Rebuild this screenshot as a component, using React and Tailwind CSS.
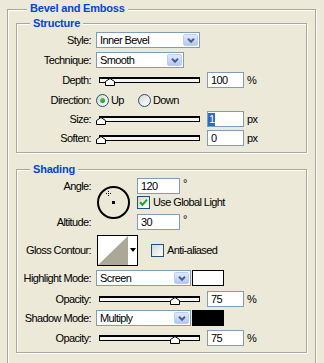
import React from "react";

function Group({ title, titleClass, className = "", children }) {
    return (
        <div
            className={`border border-[#aca899] shadow-[1px_1px_0_#fff,inset_1px_1px_0_#fff] ${className}`}
        >
            <div
                className={`w-fit bg-[#ece9d8] px-[3px] text-[11px] font-bold leading-[14px] tracking-[-0.2px] text-[#0046d5] ${titleClass}`}
            >
                {title}
            </div>
            {children}
        </div>
    );
}

function Row({ label, className = "", children }) {
    return (
        <div className={`flex h-[16px] items-center ${className}`}>
            <div className="w-[74px] text-right leading-[16px]">{label}</div>
            <div className="ml-[5px] flex items-center">{children}</div>
        </div>
    );
}

function DropBtn() {
    return (
        <div className="mr-[1px] flex h-[12px] w-[15px] items-center justify-center rounded-[2px] border border-[#bccdf4] bg-gradient-to-b from-[#e2eafd] to-[#b4c7f6]">
            <svg width="8" height="5" viewBox="0 0 8 5">
                <path d="M1 0.8 L4 3.8 L7 0.8" fill="none" stroke="#4d6185" strokeWidth="2" />
            </svg>
        </div>
    );
}

function Select({ value, className }) {
    return (
        <div className={`flex h-[16px] items-center border border-[#7f9db9] bg-white ${className}`}>
            <span className="flex-1 pl-[3px] leading-[14px]">{value}</span>
            <DropBtn />
        </div>
    );
}

function Field({ children, className = "w-[37px]" }) {
    return (
        <div className={`h-[16px] border border-[#7f9db9] bg-white pl-[3px] leading-[14px] ${className}`}>
            {children}
        </div>
    );
}

function Slider({ thumb }) {
    return (
        <div className="relative ml-[3px] mr-[7px] h-[6px] w-[101px] border border-t-2 border-black bg-[#f6f5ef]">
            <svg className={`absolute top-[-1px] ${thumb}`} width="10" height="8" viewBox="0 0 10 8">
                <path d="M0.5 7.5 V3.5 L5 0.5 L9.5 3.5 V7.5 Z" fill="#fff" stroke="#000" />
            </svg>
        </div>
    );
}

function Radio({ checked }) {
    return (
        <div className="flex h-[13px] w-[13px] items-center justify-center rounded-full border border-[#1c5180] bg-gradient-to-br from-[#d8d7cf] to-white">
            {checked && <div className="h-[5px] w-[5px] rounded-full bg-gradient-to-br from-[#5fd35f] to-[#1a8a1a]" />}
        </div>
    );
}

function Check({ checked }) {
    return (
        <div className="flex h-[13px] w-[13px] items-center justify-center border border-[#1c5180] bg-gradient-to-br from-[#d8d7cf] to-white">
            {checked && (
                <svg width="9" height="9" viewBox="0 0 9 9">
                    <path d="M1 4.2 L3.5 6.8 L8 1.6" fill="none" stroke="#21a121" strokeWidth="2" />
                </svg>
            )}
        </div>
    );
}

export default function App() {
    return (
        <div className="h-[363px] w-[324px] overflow-hidden bg-[#ece9d8] pl-[7px] pt-[9px] font-['Liberation_Sans',Arial,sans-serif] text-[11px] tracking-[-0.6px] text-black">
            <Group title="Bevel and Emboss" titleClass="-mt-[9px] ml-[11px]" className="w-[309px] px-[8px] pb-[30px]">
                <Group title="Structure" titleClass="-mt-[8px] ml-[13px]" className="mt-[8px] pb-[6px]">
                    <Row label="Style:" className="mt-[2px]">
                        <Select value="Inner Bevel" className="w-[104px]" />
                    </Row>
                    <Row label="Technique:" className="mt-[4px]">
                        <Select value="Smooth" className="w-[88px]" />
                    </Row>
                    <Row label="Depth:" className="mt-[4px]">
                        <Slider thumb="left-[5px]" />
                        <Field>100</Field>
                        <span className="ml-[3px]">%</span>
                    </Row>
                    <Row label="Direction:" className="mt-[4px]">
                        <Radio checked />
                        <span className="ml-[2px] w-[27px]">Up</span>
                        <Radio />
                        <span className="ml-[2px]">Down</span>
                    </Row>
                    <Row label="Size:" className="mt-[3px]">
                        <Slider thumb="left-[-4px]" />
                        <Field className="w-[37px] !pl-[0px]">
                            <span className="inline-block h-[13px] w-[7px] bg-[#316ac5] pl-[1px] leading-[13px] text-white">1</span>
                        </Field>
                        <span className="ml-[3px]">px</span>
                    </Row>
                    <Row label="Soften:" className="mt-[3px]">
                        <Slider thumb="left-[-4px]" />
                        <Field>0</Field>
                        <span className="ml-[3px]">px</span>
                    </Row>
                </Group>

                <Group title="Shading" titleClass="-mt-[8px] ml-[13px]" className="mt-[16px] pb-[6px]">
                    <div className="mt-[2px] flex h-[52px]">
                        <div className="flex w-[74px] flex-col justify-between text-right leading-[16px]">
                            <div>Angle:</div>
                            <div>Altitude:</div>
                        </div>
                        <div className="ml-[5px] w-[41px]">
                            <svg className="ml-[1px] mt-[8px]" width="34" height="34" viewBox="0 0 34 34">
                                <circle cx="16.5" cy="16.5" r="15.5" fill="none" stroke="#000" strokeWidth="2" />
                                <rect x="15" y="15" width="3" height="3" fill="#000" />
                                <path d="M11.5 5 V10 M9 7.5 H14" stroke="#000" strokeWidth="1" strokeDasharray="1 1" />
                            </svg>
                        </div>
                        <div className="flex flex-col">
                            <div className="flex items-start">
                                <Field className="w-[43px]">120</Field>
                                <span className="ml-[3px] leading-[10px]">°</span>
                            </div>
                            <div className="mt-[2px] flex h-[13px] items-center">
                                <Check checked />
                                <span className="ml-[3px]">Use Global Light</span>
                            </div>
                            <div className="mt-[5px] flex items-start">
                                <Field className="w-[43px]">30</Field>
                                <span className="ml-[3px] leading-[10px]">°</span>
                            </div>
                        </div>
                    </div>

                    <div className="mt-[5px] flex h-[31px] items-center">
                        <div className="w-[74px] text-right">Gloss Contour:</div>
                        <div className="ml-[6px] flex h-[31px] w-[41px] border border-black bg-white">
                            <svg width="30" height="29" viewBox="0 0 30 29">
                                <polygon points="0,29 30,0 30,29" fill="#aba897" />
                            </svg>
                            <div className="flex flex-1 justify-center pt-[12px]">
                                <div className="h-0 w-0 border-x-[3px] border-t-[4px] border-x-transparent border-t-black" />
                            </div>
                        </div>
                        <div className="ml-[13px]">
                            <Check />
                        </div>
                        <span className="ml-[3px]">Anti-aliased</span>
                    </div>

                    <Row label="Highlight Mode:" className="mt-[4px]">
                        <Select value="Screen" className="w-[95px]" />
                        <div className="ml-[1px] h-[16px] w-[32px] border border-black bg-white" />
                    </Row>
                    <Row label="Opacity:" className="mt-[5px]">
                        <Slider thumb="left-[70px]" />
                        <Field>75</Field>
                        <span className="ml-[3px]">%</span>
                    </Row>
                    <Row label="Shadow Mode:" className="mt-[3px]">
                        <Select value="Multiply" className="w-[95px]" />
                        <div className="ml-[1px] h-[16px] w-[32px] border border-black bg-black" />
                    </Row>
                    <Row label="Opacity:" className="mt-[4px]">
                        <Slider thumb="left-[70px]" />
                        <Field>75</Field>
                        <span className="ml-[3px]">%</span>
                    </Row>
                </Group>
            </Group>
        </div>
    );
}
